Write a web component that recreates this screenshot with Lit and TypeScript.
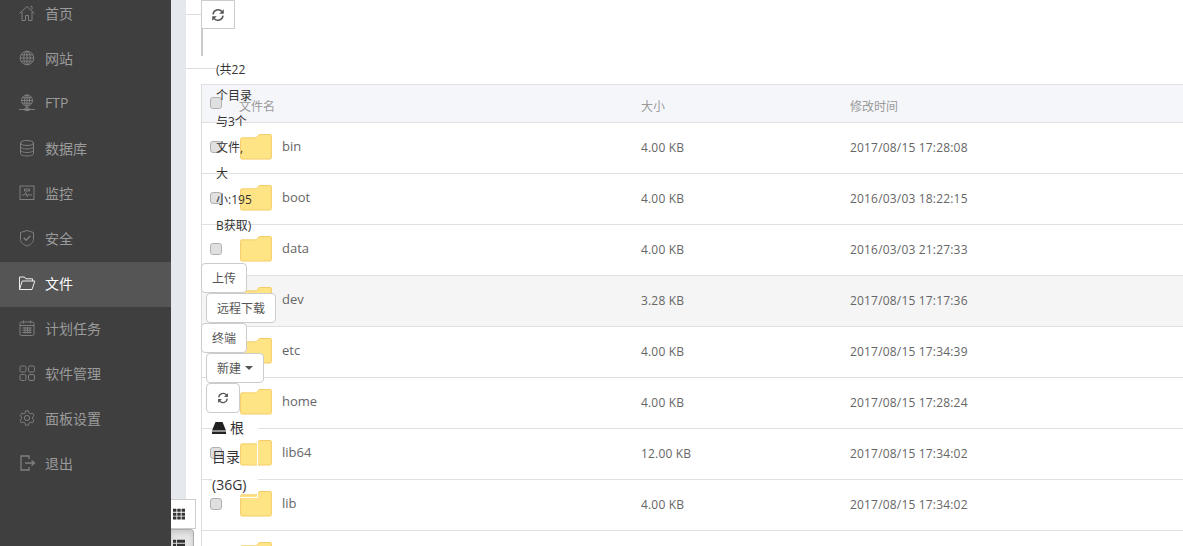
import { LitElement, html, css, svg } from "lit";
import { customElement } from "lit/decorators.js";

const navIcons: Record<string, unknown> = {
  home: svg`<path d="M1.500 9.500 9 2.500l7.500 7M4 8v8.500h3.500v-5h3v5H14V8M12.500 2.500h1.500v3"/>`,
  globe: svg`<circle cx="9" cy="9" r="6.800"/><ellipse cx="9" cy="9" rx="3.200" ry="6.800"/><path d="M9 2.200v13.600M2.200 9h13.600M3 5.800h12M3 12.200h12"/>`,
  ftp: svg`<circle cx="9" cy="6.500" r="5.500"/><ellipse cx="9" cy="6.500" rx="2.500" ry="5.500"/><path d="M3.500 6.500h11M4.500 3.800h9M4.500 9.200h9M9 1v14M1 15.500h16"/><path d="M7 14h4v2.500H7z"/>`,
  db: svg`<ellipse cx="9" cy="4" rx="6.500" ry="2.500"/><path d="M2.500 4v10.500C2.500 16 5.500 17 9 17s6.500-1 6.500-2.500V4M2.500 7.500C2.500 9 5.500 10 9 10s6.500-1 6.500-2.500M2.500 11C2.500 12.500 5.500 13.500 9 13.500s6.500-1 6.500-2.500"/>`,
  monitor: svg`<rect x="2" y="2" width="14" height="13.500"/><path d="M4 11h2.500l1.200-2.500 1.600 4 1.200-2.500 1 1H14M6.500 5h5v2h-5z"/>`,
  shield: svg`<path d="M9 1.500 2.500 3.500v7c0 3 3.500 5.500 6.500 6.500 3-1 6.500-3.500 6.500-6.500v-7z"/><path d="m5.800 8.800 2.300 2.400 4.200-4.400" stroke-width="1.400"/>`,
  folder: svg`<path d="M1.500 15.500V3h5l1.200 1.800H14.500V7M1.500 15.500H14l2.800-8.500H4.200z"/>`,
  calendar: svg`<rect x="2" y="3" width="14" height="13.500" rx="1.500"/><path d="M5.500 1.500v3M12.500 1.500v3M2 6.500h14M4.500 9h9M4.500 11.200h9M4.500 13.500h9M7 8v6.500M9.500 8v6.500M12 8v6.500"/>`,
  apps: svg`<rect x="2" y="2" width="6" height="6" rx="1.500"/><rect x="10.500" y="2" width="6" height="6" rx="1.500"/><rect x="2" y="10.500" width="6" height="6" rx="1.500"/><rect x="10.500" y="10.500" width="6" height="6" rx="1.500"/>`,
  gear: svg`<circle cx="9" cy="9" r="2.600"/><path d="m7.600 1.800 2.800 0 .5 2 1.700 1 2-.6 1.400 2.500-1.500 1.400v1.800l1.500 1.400-1.400 2.500-2-.6-1.700 1-.5 2h-2.800l-.5-2-1.700-1-2 .6-1.400-2.500 1.500-1.400V8.100L2.300 6.700l1.400-2.500 2 .6 1.700-1z"/>`,
  logout: svg`<path d="M11 5V2H3v14h8v-3M7 9h9.500M13.500 6.500 16.500 9l-3 2.500" stroke-width="1.300"/>`,
};

const NAV = [
  ["home", "首页"], ["globe", "网站"], ["ftp", "FTP"], ["db", "数据库"], ["monitor", "监控"],
  ["shield", "安全"], ["folder", "文件"], ["calendar", "计划任务"], ["apps", "软件管理"],
  ["gear", "面板设置"], ["logout", "退出"],
];

const FILES = [
  ["bin", "4.00 KB", "2017/08/15 17:28:08"],
  ["boot", "4.00 KB", "2016/03/03 18:22:15"],
  ["data", "4.00 KB", "2016/03/03 21:27:33"],
  ["dev", "3.28 KB", "2017/08/15 17:17:36"],
  ["etc", "4.00 KB", "2017/08/15 17:34:39"],
  ["home", "4.00 KB", "2017/08/15 17:28:24"],
  ["lib64", "12.00 KB", "2017/08/15 17:34:02"],
  ["lib", "4.00 KB", "2017/08/15 17:34:02"],
  ["", "", ""],
];

const SUMMARY = ["(共22", "个目录", "与3个", "文件,", "大", "小:195", "B获取)"];

@customElement("app-root")
export class AppRoot extends LitElement {
  static styles = css`
    :host {
      display: block;
      height: 546px;
      overflow: hidden;
      font-family: "Open Sans", "Noto Sans CJK SC", sans-serif;
      font-size: 12px;
      color: #555;
      background: #fff;
    }
    .shell { display: flex; height: 546px; position: relative; }
    .side {
      flex: 0 0 171px;
      background: #3f3f3f;
      margin-top: -8px;
      height: 554px;
      position: relative;
      z-index: 9;
    }
    .nav {
      height: 45px;
      box-sizing: border-box;
      padding: 0 0 4px 18px;
      display: flex;
      align-items: center;
      gap: 9px;
      font-size: 14px;
      color: #9b9b9b;
    }
    .nav svg { width: 18px; height: 18px; fill: none; stroke: #7f7f7f; stroke-width: 1; flex: none; }
    .nav.on { background: #555; color: #fff; }
    .nav.on svg { stroke: #eee; }
    .gutter { flex: 0 0 15px; background: #e5e9ed; }
    .main { flex: 1; min-width: 0; padding: 84px 0 0 15px; position: relative; }
    .table { border-left: 1px solid #ddd; height: 480px; }
    .row {
      display: grid;
      grid-template-columns: 30px 42px 359px 209px 1fr;
      align-items: center;
      padding-left: 8px;
      height: 50px;
      border-bottom: 1px solid #e0e0e0;
      color: #666;
    }
    .row.head {
      height: 37px;
      background: #f5f6fa;
      border-top: 1px solid #e0e0e0;
      color: #999;
    }
    .row.hl { background: #f5f5f5; }
    .row > * { position: relative; z-index: 3; }
    .head .title { grid-column: 2 / 4; margin-left: -1px; padding-top: 5px; }
    .head .c { padding-top: 5px; }
    .box {
      width: 10px; height: 10px;
      border: 1px solid #b0b0b0;
      border-radius: 3px;
      background: #e0e0e0;
      margin-top: -2px;
    }
    .folder { width: 32px; height: 26px; display: block; margin-top: -3px; }
    .name { font-size: 13px; margin-top: -5px; }
    .num { margin-top: -1px; letter-spacing: .18px; }

    .refresh { width: 14px; height: 14px; display: block; fill: #555; stroke: none; }
    .refresh .arc { fill: none; stroke: #555; stroke-width: 1.700; }
    .stub {
      position: absolute; left: 15px; top: 0;
      width: 32px; height: 27px;
      border: 1px solid #ccc;
      display: flex; align-items: center; justify-content: center;
      background: #fff;
      z-index: 4;
    }
    .rule { position: absolute; left: 0; height: 1px; background: #ddd; }
    .rule.a { top: 14px; width: 15px; }
    .rule.b { top: 68px; width: 30px; }
    .bar { position: absolute; left: 15px; top: 28px; width: 2px; height: 28px; background: #ccc; }

    .summary {
      position: absolute; left: 30px; top: 57px;
      line-height: 26px;
      color: #333;
      z-index: 6;
    }
    .summary div { white-space: nowrap; }

    .tools {
      position: absolute; left: 15px; top: 263px;
      display: flex; flex-direction: column; align-items: flex-start;
      z-index: 6;
    }
    .btn {
      height: 28px;
      padding: 0 10px;
      border: 1px solid #ccc;
      border-radius: 4px;
      background: #fff;
      color: #555;
      display: flex; align-items: center; gap: 4px;
      white-space: nowrap;
    }
    .btn.in { margin-left: 5px; }
    .btn.icon { width: 12px; justify-content: center; }
    .caret {
      width: 0; height: 0;
      border-left: 4px solid transparent;
      border-right: 4px solid transparent;
      border-top: 4px solid #555;
    }

    .disk-bg { position: absolute; left: 26px; top: 416px; width: 46px; height: 82px; background: #fff; z-index: 2; }
    .disk-edge {
      position: absolute; left: 26px; top: 442px; width: 45px; height: 55px;
      border-right: 1px solid #fff; border-bottom: 1px solid #fff;
      z-index: 4;
    }
    .disk {
      position: absolute; left: 26px; top: 414px;
      font-size: 14px; line-height: 28.500px; color: #333;
      z-index: 6;
    }
    .disk div { white-space: nowrap; display: flex; align-items: center; gap: 4px; }
    .disk svg { width: 14px; height: 14px; fill: #222; }

    .view {
      position: absolute; left: 171px; width: 25px;
      display: flex; align-items: center; padding-left: 2px; box-sizing: border-box;
      z-index: 7;
    }
    .view.one { top: 499px; height: 30px; background: #fff; border: 1px solid #ccc; border-left: 0; }
    .view.two {
      top: 529px; height: 30px; width: 23px;
      background: #e6e6e6; border: 1px solid #adadad; border-left: 0; border-top-right-radius: 4px;
      box-shadow: inset 0 3px 5px rgba(0,0,0,.125);
      align-items: flex-start; padding-top: 9px;
    }
    .view svg { width: 12px; height: 12px; fill: #333; }
  `;

  private refresh() {
    return html`<svg class="refresh" viewBox="0 0 16 16">
      <path class="arc" d="M2.300 7.200A5.900 5.900 0 0 1 12.600 4"/>
      <path d="M14.600 1.400v5.200H9.400z"/>
      <path class="arc" d="M13.700 8.800A5.900 5.900 0 0 1 3.400 12"/>
      <path d="M1.400 14.600V9.400h5.200z"/>
    </svg>`;
  }

  private folder() {
    return html`<svg class="folder" viewBox="0 0 33 27"><path d="M.5 5.500a1.500 1.500 0 0 1 1.500-1.500h14c.8 0 1.200-.3 1.700-1L19 1.300c.4-.6.800-.8 1.500-.8H31a1.500 1.500 0 0 1 1.500 1.500v22.500a1.500 1.500 0 0 1-1.500 1.500H2A1.500 1.500 0 0 1 .5 24.500z" fill="#ffe486" stroke="#f4cb63"/></svg>`;
  }

  render() {
    return html`
      <div class="shell">
        <nav class="side">
          ${NAV.map(([ic, label]) => html`
            <div class="nav ${label === "文件" ? "on" : ""}">
              <svg viewBox="0 0 18 18">${navIcons[ic]}</svg><span>${label}</span>
            </div>`)}
        </nav>
        <div class="gutter"></div>
        <main class="main">
          <div class="table">
            <div class="row head">
              <div class="box"></div>
              <div class="title">文件名</div>
              <div class="c">大小</div>
              <div class="c">修改时间</div>
            </div>
            ${FILES.map(([n, s, t]) => html`
              <div class="row ${n === "dev" ? "hl" : ""}">
                ${n ? html`<div class="box"></div>` : html`<div></div>`}
                ${this.folder()}
                <div class="name">${n}</div>
                <div class="num">${s}</div>
                <div class="num">${t}</div>
              </div>`)}
          </div>

          <div class="rule a"></div>
          <div class="rule b"></div>
          <div class="bar"></div>
          <div class="stub">${this.refresh()}</div>

          <div class="summary">${SUMMARY.map((l) => html`<div>${l}</div>`)}</div>

          <div class="tools">
            <div class="btn">上传</div>
            <div class="btn in">远程下载</div>
            <div class="btn">终端</div>
            <div class="btn in">新建<span class="caret"></span></div>
            <div class="btn in icon">${this.refresh()}</div>
          </div>

          <div class="disk-bg"></div>
          <div class="disk-edge"></div>
          <div class="disk">
            <div><svg viewBox="0 0 14 14"><path d="M3.500 1h7L14 9.500H0zM0 10.500h14V13H0z"/></svg>根</div>
            <div>目录</div>
            <div>(36G)</div>
          </div>
        </main>

        <div class="view one"><svg viewBox="0 0 14 14"><path d="M0 1h4v3.500H0zM5 1h4v3.500H5zM10 1h4v3.500h-4zM0 5.500h4V9H0zM5 5.500h4V9H5zM10 5.500h4V9h-4zM0 10h4v3.500H0zM5 10h4v3.500H5zM10 10h4v3.500h-4z"/></svg></div>
        <div class="view two"><svg viewBox="0 0 14 14"><path d="M0 1h3.500v3.500H0zM4.500 1H14v3.500H4.500zM0 5.500h3.500V9H0zM4.500 5.500H14V9H4.500zM0 10h3.500v3.500H0zM4.500 10H14v3.500H4.500z"/></svg></div>
      </div>
    `;
  }
}
